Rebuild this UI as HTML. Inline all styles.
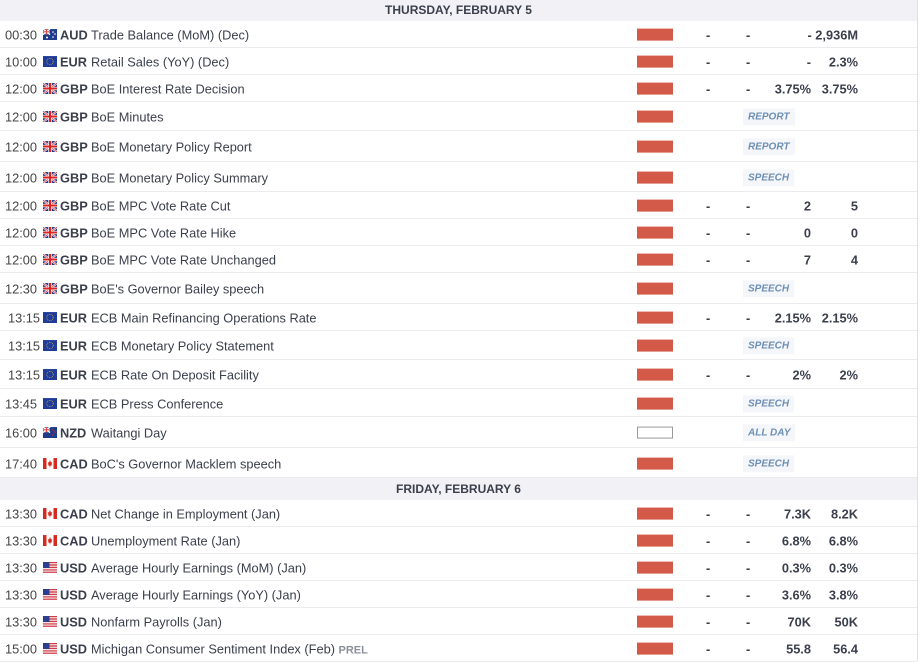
<!DOCTYPE html>
<html><head><meta charset="utf-8"><style>
body{margin:0;width:919px;height:661px;overflow:hidden;background:#fff;font-family:"Liberation Sans",sans-serif;color:#3b3f4c;font-size:12.8px}
.r{position:absolute;left:0;width:917px;border-bottom:1px solid #ebebef;box-sizing:border-box}
.r>*{position:absolute;top:50%;transform:translateY(-45%);white-space:nowrap}
.h{position:absolute;left:0;width:917px;background:#f2f2f6;text-align:center;font-weight:bold;font-size:12px;color:#3b3f4c}
.t{left:5px;color:#444}
.f{left:43px;width:14px;height:11px}
.c{left:60px;font-weight:bold}
.e{left:91px}
.b{left:637px;width:36px;height:12px;background:#d35a48}
.bw{left:637px;width:34px;height:10px;border:1px solid #999;background:#fff}
.d1{left:706px;font-weight:bold}
.d2{left:746px;font-weight:bold}
.v1{right:106px;font-weight:bold}
.v2{right:59px;font-weight:bold}
.g{left:743px;background:#f4f6f9;color:#6d8fb5;font-style:italic;font-weight:bold;font-size:10px;padding:3px 5px}
.vl{position:absolute;left:917px;top:0;width:1px;height:661px;background:#e0e0e4}
</style></head><body>
<svg width="0" height="0" style="position:absolute">
<defs>
<symbol id="au" viewBox="0 0 14 11"><rect width="14" height="11" fill="#1f3c8c"/><path d="M0 0L7 5.5M7 0L0 5.5" stroke="#fff" stroke-width="1.4"/><path d="M3.5 0V5.5M0 2.75H7" stroke="#fff" stroke-width="1.6"/><path d="M3.5 0V5.5M0 2.75H7" stroke="#d22" stroke-width=".8"/><circle cx="10" cy="3" r=".8" fill="#fff"/><circle cx="12" cy="5" r=".8" fill="#fff"/><circle cx="10" cy="8" r=".8" fill="#fff"/><circle cx="4" cy="8.5" r="1" fill="#fff"/></symbol>
<symbol id="eu" viewBox="0 0 14 11"><rect width="14" height="11" fill="#1f3c9a"/><circle cx="7" cy="5.5" r="3.2" fill="none" stroke="#e8c521" stroke-width=".7" stroke-dasharray=".8 .9"/></symbol>
<symbol id="gb" viewBox="0 0 14 11"><rect width="14" height="11" fill="#1f3c8c"/><path d="M0 0L14 11M14 0L0 11" stroke="#fff" stroke-width="2"/><path d="M0 0L14 11M14 0L0 11" stroke="#d22" stroke-width=".7"/><path d="M7 0V11M0 5.5H14" stroke="#fff" stroke-width="3.4"/><path d="M7 0V11M0 5.5H14" stroke="#d22" stroke-width="2"/></symbol>
<symbol id="nz" viewBox="0 0 14 11"><rect width="14" height="11" fill="#1f3c8c"/><path d="M0 0L7 5.5M7 0L0 5.5" stroke="#fff" stroke-width="1.4"/><path d="M3.5 0V5.5M0 2.75H7" stroke="#fff" stroke-width="1.6"/><path d="M3.5 0V5.5M0 2.75H7" stroke="#d22" stroke-width=".8"/><circle cx="10" cy="3" r=".8" fill="#d22"/><circle cx="12" cy="5" r=".8" fill="#d22"/><circle cx="10" cy="8" r=".8" fill="#d22"/></symbol>
<symbol id="ca" viewBox="0 0 14 11"><rect width="14" height="11" fill="#fff"/><rect width="3.5" height="11" fill="#d52b1e"/><rect x="10.5" width="3.5" height="11" fill="#d52b1e"/><path d="M7 2L8 4.5 9.3 4 8.5 6.5 9.5 7 7.3 7.8V9.3H6.7V7.8L4.5 7 5.5 6.5 4.7 4 6 4.5Z" fill="#d52b1e"/></symbol>
<symbol id="us" viewBox="0 0 14 11"><rect width="14" height="11" fill="#fff"/><path d="M0 .4H14M0 2.1H14M0 3.8H14M0 5.5H14M0 7.2H14M0 8.9H14M0 10.6H14" stroke="#c8202f" stroke-width=".85"/><rect width="6.5" height="5.9" fill="#2a3f8f"/></symbol>
</defs></svg>

<div class="h" style="top:0;height:21px;line-height:21px">THURSDAY, FEBRUARY 5</div>

<div class="r" style="top:21px;height:27px"><span class="t">00:30</span><svg class="f"><use href="#au"/></svg><span class="c">AUD</span><span class="e">Trade Balance (MoM) (Dec)</span><span class="b"></span><span class="d1">-</span><span class="d2">-</span><span class="v2">- 2,936M</span></div>
<div class="r" style="top:48px;height:27px"><span class="t">10:00</span><svg class="f"><use href="#eu"/></svg><span class="c">EUR</span><span class="e">Retail Sales (YoY) (Dec)</span><span class="b"></span><span class="d1">-</span><span class="d2">-</span><span class="v1">-</span><span class="v2">2.3%</span></div>
<div class="r" style="top:75px;height:27px"><span class="t">12:00</span><svg class="f"><use href="#gb"/></svg><span class="c">GBP</span><span class="e">BoE Interest Rate Decision</span><span class="b"></span><span class="d1">-</span><span class="d2">-</span><span class="v1">3.75%</span><span class="v2">3.75%</span></div>
<div class="r" style="top:102px;height:29px"><span class="t">12:00</span><svg class="f"><use href="#gb"/></svg><span class="c">GBP</span><span class="e">BoE Minutes</span><span class="b"></span><span class="g">REPORT</span></div>
<div class="r" style="top:131px;height:31px"><span class="t">12:00</span><svg class="f"><use href="#gb"/></svg><span class="c">GBP</span><span class="e">BoE Monetary Policy Report</span><span class="b"></span><span class="g">REPORT</span></div>
<div class="r" style="top:162px;height:30px"><span class="t">12:00</span><svg class="f"><use href="#gb"/></svg><span class="c">GBP</span><span class="e">BoE Monetary Policy Summary</span><span class="b"></span><span class="g">SPEECH</span></div>
<div class="r" style="top:192px;height:27px"><span class="t">12:00</span><svg class="f"><use href="#gb"/></svg><span class="c">GBP</span><span class="e">BoE MPC Vote Rate Cut</span><span class="b"></span><span class="d1">-</span><span class="d2">-</span><span class="v1">2</span><span class="v2">5</span></div>
<div class="r" style="top:219px;height:27px"><span class="t">12:00</span><svg class="f"><use href="#gb"/></svg><span class="c">GBP</span><span class="e">BoE MPC Vote Rate Hike</span><span class="b"></span><span class="d1">-</span><span class="d2">-</span><span class="v1">0</span><span class="v2">0</span></div>
<div class="r" style="top:246px;height:27px"><span class="t">12:00</span><svg class="f"><use href="#gb"/></svg><span class="c">GBP</span><span class="e">BoE MPC Vote Rate Unchanged</span><span class="b"></span><span class="d1">-</span><span class="d2">-</span><span class="v1">7</span><span class="v2">4</span></div>
<div class="r" style="top:273px;height:31px"><span class="t">12:30</span><svg class="f"><use href="#gb"/></svg><span class="c">GBP</span><span class="e">BoE's Governor Bailey speech</span><span class="b"></span><span class="g">SPEECH</span></div>
<div class="r" style="top:304px;height:27px"><span class="t" style="left:8px">13:15</span><svg class="f"><use href="#eu"/></svg><span class="c">EUR</span><span class="e">ECB Main Refinancing Operations Rate</span><span class="b"></span><span class="d1">-</span><span class="d2">-</span><span class="v1">2.15%</span><span class="v2">2.15%</span></div>
<div class="r" style="top:331px;height:29px"><span class="t" style="left:8px">13:15</span><svg class="f"><use href="#eu"/></svg><span class="c">EUR</span><span class="e">ECB Monetary Policy Statement</span><span class="b"></span><span class="g">SPEECH</span></div>
<div class="r" style="top:360px;height:29px"><span class="t" style="left:8px">13:15</span><svg class="f"><use href="#eu"/></svg><span class="c">EUR</span><span class="e">ECB Rate On Deposit Facility</span><span class="b"></span><span class="d1">-</span><span class="d2">-</span><span class="v1">2%</span><span class="v2">2%</span></div>
<div class="r" style="top:389px;height:28px"><span class="t">13:45</span><svg class="f"><use href="#eu"/></svg><span class="c">EUR</span><span class="e">ECB Press Conference</span><span class="b"></span><span class="g">SPEECH</span></div>
<div class="r" style="top:417px;height:31px"><span class="t">16:00</span><svg class="f"><use href="#nz"/></svg><span class="c">NZD</span><span class="e">Waitangi Day</span><span class="bw"></span><span class="g">ALL DAY</span></div>
<div class="r" style="top:448px;height:30px"><span class="t">17:40</span><svg class="f"><use href="#ca"/></svg><span class="c">CAD</span><span class="e">BoC's Governor Macklem speech</span><span class="b"></span><span class="g">SPEECH</span></div>

<div class="h" style="top:478px;height:22px;line-height:22px">FRIDAY, FEBRUARY 6</div>

<div class="r" style="top:500px;height:27px"><span class="t">13:30</span><svg class="f"><use href="#ca"/></svg><span class="c">CAD</span><span class="e">Net Change in Employment (Jan)</span><span class="b"></span><span class="d1">-</span><span class="d2">-</span><span class="v1">7.3K</span><span class="v2">8.2K</span></div>
<div class="r" style="top:527px;height:27px"><span class="t">13:30</span><svg class="f"><use href="#ca"/></svg><span class="c">CAD</span><span class="e">Unemployment Rate (Jan)</span><span class="b"></span><span class="d1">-</span><span class="d2">-</span><span class="v1">6.8%</span><span class="v2">6.8%</span></div>
<div class="r" style="top:554px;height:27px"><span class="t">13:30</span><svg class="f"><use href="#us"/></svg><span class="c">USD</span><span class="e">Average Hourly Earnings (MoM) (Jan)</span><span class="b"></span><span class="d1">-</span><span class="d2">-</span><span class="v1">0.3%</span><span class="v2">0.3%</span></div>
<div class="r" style="top:581px;height:27px"><span class="t">13:30</span><svg class="f"><use href="#us"/></svg><span class="c">USD</span><span class="e">Average Hourly Earnings (YoY) (Jan)</span><span class="b"></span><span class="d1">-</span><span class="d2">-</span><span class="v1">3.6%</span><span class="v2">3.8%</span></div>
<div class="r" style="top:608px;height:27px"><span class="t">13:30</span><svg class="f"><use href="#us"/></svg><span class="c">USD</span><span class="e">Nonfarm Payrolls (Jan)</span><span class="b"></span><span class="d1">-</span><span class="d2">-</span><span class="v1">70K</span><span class="v2">50K</span></div>
<div class="r" style="top:635px;height:27px"><span class="t">15:00</span><svg class="f"><use href="#us"/></svg><span class="c">USD</span><span class="e">Michigan Consumer Sentiment Index (Feb) <b style="color:#8a8f9a;font-size:11px">PREL</b></span><span class="b"></span><span class="d1">-</span><span class="d2">-</span><span class="v1">55.8</span><span class="v2">56.4</span></div>

<div class="vl"></div>
</body></html>
